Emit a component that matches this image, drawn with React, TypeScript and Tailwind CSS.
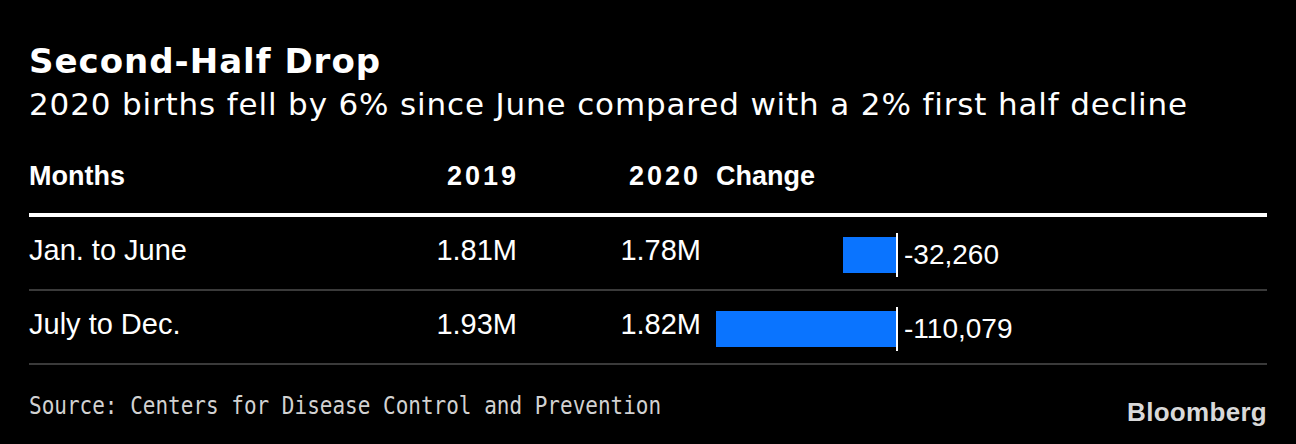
import React from 'react';

interface BirthRow {
  label: string;
  y2019: string;
  y2020: string;
  change: number;
}

const rows: BirthRow[] = [
  { label: 'Jan. to June', y2019: '1.81M', y2020: '1.78M', change: -32260 },
  { label: 'July to Dec.', y2019: '1.93M', y2020: '1.82M', change: -110079 },
];

// widest bar fills the 180px track
const maxChange = Math.max(...rows.map(r => Math.abs(r.change)));
const BAR_TRACK = 180;

export default function App() {
  return (
    <div className="w-[1296px] h-[444px] bg-black text-white px-[29px] pt-[42px] overflow-hidden">
      {/* Title */}
      <h1 className="font-['DejaVu_Sans',sans-serif] font-bold text-[34px] leading-[39px] tracking-[1px]">
        Second-Half Drop
      </h1>
      <p className="mt-[5px] font-['DejaVu_Sans',sans-serif] text-[31px] leading-[36px] tracking-[0.85px]">
        2020 births fell by 6% since June compared with a 2% first half decline
      </p>

      {/* Table */}
      <div className="mt-[39px] font-['Liberation_Sans',Arial,sans-serif]">
        <div className="grid grid-cols-[300px_188px_184px_1fr] pb-[22px] border-b-4 border-white text-[27px] leading-[30px] font-bold">
          <div>Months</div>
          <div className="text-right tracking-[3px] -mr-[2px]">2019</div>
          <div className="text-right tracking-[3px]">2020</div>
          <div className="pl-[15px]">Change</div>
        </div>

        {rows.map((row) => {
          const barWidth = Math.round((Math.abs(row.change) / maxChange) * BAR_TRACK);
          return (
            <div
              key={row.label}
              className="grid grid-cols-[300px_188px_184px_1fr] h-[74px] border-b-2 border-[#3a3a3a] text-[29px] leading-[32px]"
            >
              <div className="flex items-center pb-[6px]">{row.label}</div>
              <div className="flex items-center justify-end pb-[6px]">{row.y2019}</div>
              <div className="flex items-center justify-end pb-[6px]">{row.y2020}</div>
              <div className="flex items-center pl-[15px] pt-[3px]">
                <div className="w-[180px] flex justify-end">
                  <div className="h-[36px] bg-[#0a74ff]" style={{ width: barWidth }} />
                </div>
                <div className="w-[2px] h-[44px] bg-white" />
                <div className="ml-[6px] text-[28px]">{row.change.toLocaleString('en-US')}</div>
              </div>
            </div>
          );
        })}
      </div>

      {/* Footer */}
      <div className="mt-[27px] flex justify-between items-start">
        <p className="font-['DejaVu_Sans_Mono',monospace] text-[24px] leading-[28px] text-[#d2d2d2] origin-left scale-x-[0.875] whitespace-nowrap">
          Source: Centers for Disease Control and Prevention
        </p>
        <div className="mt-[6px] font-['Liberation_Sans',Arial,sans-serif] font-bold text-[26px] leading-[28px] tracking-[0.3px] text-[#d9d9d9]">
          Bloomberg
        </div>
      </div>
    </div>
  );
}
